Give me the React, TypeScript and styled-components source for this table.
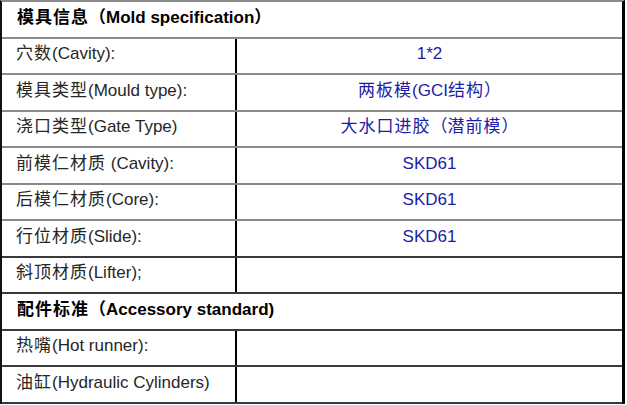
import React from 'react';
import styled, { createGlobalStyle } from 'styled-components';

type Item = { label: string; value?: string; section?: boolean; dark?: boolean };

const items: Item[] = [
  { label: '模具信息（Mold specification）', section: true },
  { label: '穴数(Cavity):', value: '1*2' },
  { label: '模具类型(Mould type):', value: '两板模(GCI结构）' },
  { label: '浇口类型(Gate Type)', value: '大水口进胶（潜前模）' },
  { label: '前模仁材质 (Cavity):', value: 'SKD61' },
  { label: '后模仁材质(Core):', value: 'SKD61' },
  { label: '行位材质(Slide):', value: 'SKD61', dark: true },
  { label: '斜顶材质(Lifter);', value: '', dark: true },
  { label: '配件标准（Accessory standard)', section: true, dark: true },
  { label: '热嘴(Hot runner):', value: '', dark: true },
  { label: '油缸(Hydraulic Cylinders)', value: '', dark: true },
];

// the Chinese glyphs sit a little wider apart than the latin ones
const HAN = /([\u4e00-\u9fff]+)/;

function Text({ children }: { children?: string }) {
  if (!children) return null;
  return (
    <Line>
      {children.split(HAN).map((part, i) =>
        HAN.test(part) ? <Han key={i}>{part}</Han> : <React.Fragment key={i}>{part}</React.Fragment>
      )}
    </Line>
  );
}

export default function App() {
  return (
    <>
      <GlobalStyle />
      <Sheet>
        {items.map((item) =>
          item.section ? (
            <Row key={item.label} $dark={item.dark}>
              <SectionTitle>
                <Text>{item.label}</Text>
              </SectionTitle>
            </Row>
          ) : (
            <Row key={item.label} $dark={item.dark}>
              <Label>
                <Text>{item.label}</Text>
              </Label>
              <Value>
                <Text>{item.value}</Text>
              </Value>
            </Row>
          )
        )}
      </Sheet>
    </>
  );
}

const GlobalStyle = createGlobalStyle`
  html, body {
    margin: 0;
    padding: 0;
    background: #ffffff;
  }

  body {
    font-family: "Liberation Sans", "Noto Sans CJK SC", sans-serif;
    font-size: 17px;
  }
`;

const Sheet = styled.div`
  width: 625px;
  box-sizing: border-box;
  border-top: 2px solid #8a8a8a;
  border-left: 2px solid #111;
  border-right: 3px solid #000;

  display: flex;
  flex-direction: column;
`;

const Row = styled.div<{ $dark?: boolean }>`
  height: 36.5px;
  box-sizing: border-box;
  border-bottom: 2px solid ${(p) => (p.$dark ? '#3a3a3a' : '#8a8a8a')};

  display: grid;
  grid-template-columns: 235px 1fr;
  align-items: stretch;
`;

const Line = styled.span`
  white-space: pre;
  line-height: 20px;
`;

const Han = styled.span`
  letter-spacing: 1px;
`;

const Label = styled.div`
  display: flex;
  align-items: center;
  padding-left: 14px;
  padding-bottom: 3px;
  border-right: 2px solid #000;
  color: #262626;
`;

const Value = styled.div`
  display: flex;
  align-items: center;
  justify-content: center;
  padding-bottom: 3px;
  color: #1c1ca6;
`;

const SectionTitle = styled.div`
  grid-column: 1 / -1;
  display: flex;
  align-items: center;
  padding-left: 15px;
  padding-bottom: 3px;
  font-weight: bold;
  color: #000;
`;
